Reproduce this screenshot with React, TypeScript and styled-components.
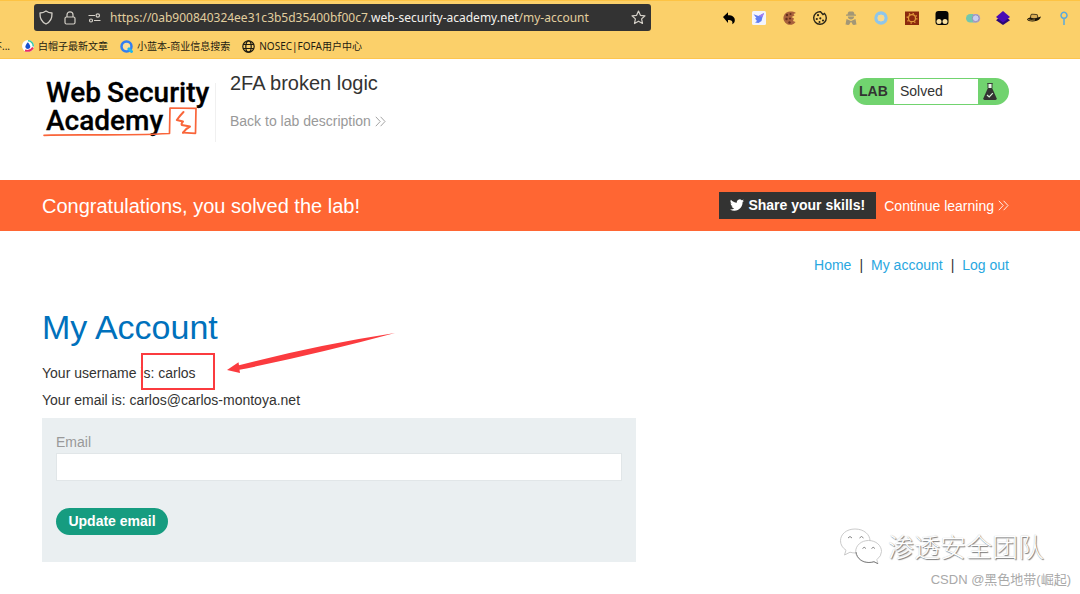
import React from 'react';
import styled, { createGlobalStyle } from 'styled-components';

const GlobalStyle = createGlobalStyle`
  *, *::before, *::after { box-sizing: border-box; }
  html, body { margin: 0; padding: 0; background: #fff; }
  body {
    font-family: "Liberation Sans", "Noto Sans CJK SC", sans-serif;
    font-size: 14px;
    line-height: 20px;
    color: #333332;
    overflow-x: hidden;
  }
  a { text-decoration: none; color: inherit; }
  svg { display: block; flex: none; }
`;

const Page = styled.div`
  position: relative;
  min-height: 100vh;
  overflow: hidden;
`;

/* ---------- browser chrome ---------- */

const Chrome = styled.div`
  background: #fbd06a;
  border-top: 1px solid #fdc344;
  border-bottom: 1px solid #fdc54e;
  font-family: "Noto Sans", "Noto Sans CJK SC", sans-serif;
`;

const Toolbar = styled.div`
  display: flex;
  align-items: center;
  gap: 70px;
  padding: 3px 8px 0 34px;
`;

const AddressBar = styled.div`
  flex: 1;
  min-width: 0;
  height: 27px;
  display: flex;
  align-items: center;
  gap: 8px;
  padding: 0 5px 0 4px;
  border-radius: 3px;
  background: #333333;
  color: #d4d0c8;
`;

const AddressInput = styled.div`
  flex: 1;
  min-width: 0;
  overflow: hidden;
  white-space: nowrap;
  font-size: 12px;
  line-height: 20px;
  color: #e2cf9f;
`;

const Domain = styled.span`
  color: #f4f2ee;
`;

const IconButton = styled.button`
  display: flex;
  align-items: center;
  justify-content: center;
  width: 16px;
  height: 16px;
  padding: 0;
  border: 0;
  background: none;
  color: inherit;
`;

const Extensions = styled.div`
  flex: none;
  width: 351px;
  display: flex;
  justify-content: space-between;
`;

const Bookmarks = styled.nav`
  height: 27px;
  display: flex;
  align-items: center;
  gap: 12px;
  padding-top: 3px;
  overflow: hidden;
  font-size: 10px;
  line-height: 16px;
  color: #1d1a10;
  white-space: nowrap;
`;

const Bookmark = styled.a`
  display: flex;
  align-items: center;
  gap: 4px;
`;

const ClippedBookmark = styled(Bookmark)`
  width: 10px;
  justify-content: flex-end;
  overflow: hidden;
`;

/* ---------- lab header ---------- */

const Gutter = styled.div`
  padding: 0 71px 0 42px;
`;

const LabHeader = styled(Gutter)`
  display: flex;
  align-items: flex-start;
  padding-top: 12px;
  height: 121px;
`;

const LogoLink = styled.a`
  display: block;
  padding-right: 2px;
  margin: 0 12px 0 0;
`;

const TitleBlock = styled.div`
  flex: 1;
`;

const LabTitle = styled.h2`
  margin: 0 0 16px;
  font-size: 20px;
  line-height: 24px;
  font-weight: 400;
`;

const ArrowLink = styled.a<{ $color: string }>`
  display: inline-flex;
  align-items: center;
  gap: 4px;
  color: ${(p) => p.$color};
  white-space: nowrap;
`;

const LabStatus = styled.div`
  display: flex;
  height: 27px;
  margin-top: 7px;
  border-radius: 14px;
  overflow: hidden;
  background: #71d36f;
  line-height: 27px;
`;

const LabTag = styled.strong`
  width: 41px;
  padding-left: 6px;
`;

const LabState = styled.span`
  width: 84px;
  padding-left: 6px;
  margin: 1px 0;
  line-height: 25px;
  background: #fff;
`;

const LabFlask = styled.span`
  width: 31px;
  padding: 4px 0 0 4px;
`;

/* ---------- banner ---------- */

const Banner = styled(Gutter)`
  display: flex;
  align-items: center;
  gap: 8px;
  height: 51px;
  background: #ff6633;
  color: #fff;
`;

const BannerText = styled.p`
  flex: 1;
  margin: 0;
  font-size: 20px;
  line-height: 24px;
`;

const ShareButton = styled.button`
  display: flex;
  align-items: center;
  justify-content: center;
  gap: 4px;
  width: 157px;
  height: 27px;
  padding: 0 0 1px;
  border: 0;
  background: #333332;
  color: #fff;
  font: bold 14px/20px "Liberation Sans", sans-serif;
`;

/* ---------- account ---------- */

const AccountNav = styled.nav`
  display: flex;
  justify-content: flex-end;
  gap: 8px;
  padding-top: 24px;
`;

const NavLink = styled.a`
  color: #29a7df;
`;

const AccountTitle = styled.h1`
  margin: 32px 0 16px;
  font-size: 34px;
  line-height: 40px;
  font-weight: 400;
  color: #0071bc;
`;

const Fact = styled.p`
  position: relative;
  margin: 0 0 7px;
`;

const Highlight = styled.span`
  position: absolute;
  left: 99px;
  top: -10px;
  width: 74px;
  height: 37px;
  border: 2px solid #fb3b3f;
`;

const Arrow = styled.svg`
  position: absolute;
  left: 185px;
  top: -32px;
`;

const EmailForm = styled.form`
  display: flex;
  flex-direction: column;
  align-items: flex-start;
  max-width: 594px;
  height: 144px;
  margin-top: 8px;
  padding: 14px;
  background: #eaeff1;
`;

const Label = styled.label`
  color: #999;
`;

const EmailInput = styled.input`
  width: 100%;
  height: 28px;
  margin: 1px 0 27px;
  padding: 0 8px;
  border: 1px solid #e1e6e8;
  background: #fff;
  font: inherit;
`;

const SubmitButton = styled.button`
  width: 112px;
  height: 27px;
  padding: 0 0 1px;
  border: 0;
  border-radius: 14px;
  background: #169c80;
  color: #fff;
  font: bold 14px/20px "Liberation Sans", sans-serif;
  white-space: nowrap;
`;

/* ---------- watermark ---------- */

const Watermark = styled.div`
  position: absolute;
  right: 9px;
  top: 526px;
  display: flex;
  flex-direction: column;
  align-items: flex-end;
  font-family: "Liberation Sans", "Noto Sans CJK SC", sans-serif;
  pointer-events: none;
`;

const TeamMark = styled.div`
  display: flex;
  align-items: center;
  gap: 5px;
  margin-right: 27px;
  font-family: "Noto Sans CJK SC", sans-serif;
  font-size: 26px;
  line-height: 40px;
  font-weight: 300;
  color: #fff;
  text-shadow: 1px 1px 1px #777, 0 0 1px #bbb;
`;

const AuthorMark = styled.div`
  margin-top: 4px;
  font-size: 13px;
  line-height: 20px;
  color: #a9a9a9;
`;

/* ---------- drawings ---------- */

const Chevrons = () => (
  <svg width="11" height="11" viewBox="0 0 11 11" fill="none" stroke="currentColor" strokeWidth="0.9">
    <path d="M0.8 0.8 5.2 5.5 0.8 10.2M5.6 0.8 10 5.5 5.6 10.2" />
  </svg>
);

const Logo = () => (
  <svg width="174" height="72" viewBox="0 -6 174 72" role="img" aria-label="Web Security Academy">
    <g fontFamily="Roboto, sans-serif" fontWeight="500" fontSize="28" fill="#000" stroke="#000" strokeWidth="0.300">
      <text x="4" y="25">Web</text>
      <text x="65" y="25">Security</text>
      <text x="4" y="53">Academy</text>
    </g>
    <g fill="none" stroke="#f9653a" strokeLinejoin="round" strokeLinecap="round">
      <path d="M2 58.300 C35 57.300 80 59 127.500 56.500 L128 31 L154 31.300 L153.500 56.300 L141 55.700" strokeWidth="1.700" />
      <path d="M141.500 35 Q138 38.500 134.800 43 L141 44.500 Q139 46.500 139.800 48 L148 49.500 Q144 51.500 141 55.700" strokeWidth="2" />
    </g>
    <path d="M173.500 6V65" stroke="#f0f0f0" />
  </svg>
);

const Flask = () => (
  <svg width="16" height="19" viewBox="0 0 16 19">
    <rect x="6" y="2" width="4" height="5" fill="#e6f7e6" />
    <path d="M5.200 1.500H10.800M6 2V6M10 2V6" stroke="#333" strokeWidth="0.900" />
    <path d="M5.900 6H10.100L14.600 16.200Q15 18 13.400 18H2.600Q1 18 1.400 16.200Z" fill="#333332" />
    <path d="m5 13 2.200 2 3.600-3.800" fill="none" stroke="#d9f3d8" strokeWidth="1.200" />
  </svg>
);

const Twitter = () => (
  <svg width="14" height="14" viewBox="0 0 24 24" fill="#fff">
    <path d="M23.950 4.600a10 10 0 0 1-2.820.770 4.960 4.960 0 0 0 2.160-2.720 9.900 9.900 0 0 1-3.120 1.180 4.920 4.920 0 0 0-8.390 4.480C7.690 8.100 4.070 6.130 1.640 3.160a4.920 4.920 0 0 0 1.520 6.570 4.900 4.900 0 0 1-2.230-.610v.060a4.920 4.920 0 0 0 3.950 4.830 5 5 0 0 1-2.210.080 4.940 4.940 0 0 0 4.600 3.420A9.870 9.870 0 0 1 0 19.540a14 14 0 0 0 7.550 2.210c9.050 0 14-7.500 14-13.980 0-.210 0-.420-.020-.630a9.900 9.900 0 0 0 2.420-2.540z" />
  </svg>
);

const Shield = () => (
  <svg width="14" height="15" viewBox="0 0 14 15" fill="none" stroke="currentColor" strokeWidth="1.300" strokeLinejoin="round">
    <path d="M7 1 C9 2.500 11 3 13 3 C13.200 8 11.500 12 7 14 C2.500 12 .8 8 1 3 C3 3 5 2.500 7 1Z" />
  </svg>
);

const Lock = () => (
  <svg width="12" height="14" viewBox="0 0 12 14" fill="none" stroke="currentColor" strokeWidth="1.200">
    <rect x="1" y="6" width="10" height="7" rx="1.500" />
    <path d="M3 6V3.800a3 3 0 0 1 6 0V6" />
  </svg>
);

const Permissions = () => (
  <svg width="13" height="10" viewBox="0 0 13 10" fill="none" stroke="currentColor" strokeWidth="1.200">
    <path d="M0.500 2.500H7M6 7.500H12.500" />
    <circle cx="9.800" cy="2.500" r="1.700" />
    <circle cx="3" cy="7.500" r="1.500" />
  </svg>
);

const Star = () => (
  <svg width="15" height="15" viewBox="0 0 15 15" fill="none" stroke="currentColor" strokeWidth="1.200" strokeLinejoin="round">
    <path d="m7.500 1 1.900 4.300 4.600.500-3.400 3.100.900 4.600-4-2.300-4 2.300.900-4.600L1 5.800l4.600-.500z" />
  </svg>
);

const extensionIcons: { name: string; art: React.ReactNode }[] = [
  {
    name: 'Undo',
    art: <path d="M2 7 7 2.300v2.900c4.700 0 7 2 6.800 5.200-.1 1.600-.9 3-2.600 3.800.8-3-.5-4.200-4.200-4.200v3z" fill="#000" />,
  },
  {
    name: 'Translate',
    art: (
      <>
        <rect x="1" y="1" width="14" height="14" rx="1.500" fill="#f4f5fc" />
        <path d="M2.500 4.200 7.500 6 13 3l-1.500 4-1 4-3 2-3.500-.5 2-1.500L4 8.500l1.500-.5z" fill="#5f7df2" />
        <path d="M7.500 6 13 3l-1.500 4z" fill="#a77cf0" />
      </>
    ),
  },
  {
    name: 'Cookie cleaner',
    art: (
      <>
        <path d="M9 1.500A6.700 6.700 0 1 0 13.600 12L11 11l1-2.500L9.500 7l3-1.500-1-1.500L14 3Q12 1 9 1.500Z" fill="#a8613c" />
        <g fill="#64301f"><circle cx="5" cy="5" r="1.200" /><circle cx="8.500" cy="4" r="1" /><circle cx="4.500" cy="9" r="1.200" /><circle cx="8" cy="8.500" r="1.100" /><circle cx="7.500" cy="12.500" r="1.200" /></g>
      </>
    ),
  },
  {
    name: 'Cookie editor',
    art: (
      <>
        <path d="M8.500 1.700A6.300 6.300 0 1 0 14.300 8 6 6 0 0 0 12.500 3.500L11 4.500 8.500 1.700Z" fill="none" stroke="#2b2618" strokeWidth="1.400" />
        <g fill="#2b2618"><circle cx="6" cy="5.200" r="1.100" /><circle cx="4.800" cy="9" r="1.100" /><circle cx="8.300" cy="8.300" r="1.100" /><circle cx="7.500" cy="12" r="1" /><circle cx="11" cy="10.500" r="1.100" /></g>
      </>
    ),
  },
  {
    name: 'Agent',
    art: (
      <g fill="#a39776">
        <path d="M5 2.500 6 1.500h4l1 1 .5 2H13v1.200H3V4.500h1.500zM4.800 6.500h6.400C11 8.500 9.800 9.500 8 9.500S5 8.500 4.800 6.500ZM3.500 9 8 11l4.500-2 1 5.500h-3L8 12l-2.500 2.500h-3z" />
        <circle cx="5" cy="13" r="1.900" /><circle cx="11" cy="13" r="1.900" />
      </g>
    ),
  },
  {
    name: 'Ring',
    art: (
      <>
        <circle cx="8" cy="8" r="5" fill="#fbe5ae" stroke="#8fc6ea" strokeWidth="3.400" />
        <circle cx="8" cy="8" r="3.300" fill="#fbd98a" />
      </>
    ),
  },
  {
    name: 'Gear',
    art: (
      <>
        <rect x="1" y="1.500" width="14" height="13.500" fill="#8c2a0d" />
        <circle cx="8" cy="8.200" r="3.500" fill="none" stroke="#e29a3a" strokeWidth="1.200" />
        <circle cx="8" cy="8.200" r="4.800" fill="none" stroke="#e29a3a" strokeWidth="1.400" strokeDasharray="1.300 2.470" />
      </>
    ),
  },
  {
    name: 'Script runner',
    art: (
      <>
        <rect x="1.500" y="1" width="13" height="14" rx="3" fill="#050505" />
        <circle cx="5" cy="11.500" r="2.500" fill="#fbe2a0" /><circle cx="11" cy="11.500" r="2.500" fill="#fbe2a0" />
      </>
    ),
  },
  {
    name: 'Toggle',
    art: (
      <>
        <rect x="1" y="4" width="14" height="8.500" rx="4.250" fill="#72c7ad" />
        <path d="M8 4h3a4.250 4.250 0 0 1 0 8.500H8z" fill="#b6a0cc" />
        <circle cx="10.700" cy="8.250" r="3.400" fill="#c9cdf0" stroke="#9689ad" strokeWidth="0.900" />
      </>
    ),
  },
  {
    name: 'Layers',
    art: (
      <>
        <path d="M8 4.500 15 10.200 8 15 1 10.200z" fill="#2c0875" />
        <path d="M8 1 15 7 8 12.500 1 7z" fill="#4a0bb5" />
      </>
    ),
  },
  {
    name: 'Hat',
    art: (
      <>
        <path d="M4.300 8 5 4.600Q5.300 4 8 4.300T11.200 4.600L12 8Q8 10 4.300 8Z" fill="#d9ad55" stroke="#2a2110" strokeWidth="0.800" />
        <path d="M4.100 7.500Q8 9.500 12 7.500L15 6.500Q14 10.500 8.500 11.300 2 11.800 1 9.500 1.500 8 4.100 7.500Z" fill="#1b1408" />
        <path d="M2 9.500Q5 11 9 9.900" fill="none" stroke="#caa452" strokeWidth="0.800" />
      </>
    ),
  },
  {
    name: 'Pin',
    art: <path d="M8 8.500V15M8 2.300a3 3 0 1 0 .01 0Z" fill="none" stroke="#5aa9dc" strokeWidth="1.500" />,
  },
];

const DropIcon = () => (
  <svg width="12" height="12" viewBox="0 0 12 12">
    <circle cx="6" cy="6" r="6" fill="#fff" />
    <path d="M6 .8A5.200 5.200 0 0 1 11.200 6.500" fill="none" stroke="#36c8a5" strokeWidth="1.500" />
    <path d="M11 7.500Q8.500 12 3 10.500" fill="none" stroke="#e72f66" strokeWidth="1.900" />
    <path d="M5.800 2.200Q8.800 5.500 8.200 7.300A2.500 2.500 0 0 1 3.400 7.300Q3 5.500 5.800 2.200Z" fill="#1751cf" />
  </svg>
);

const RingIcon = () => (
  <svg width="13" height="13" viewBox="0 0 13 13">
    <circle cx="6.500" cy="6.500" r="5" fill="#fbdf9a" stroke="#317ef2" strokeWidth="2.500" />
    <path d="m8 8 4.500 4.500" stroke="#20b5ea" strokeWidth="2.800" />
  </svg>
);

const GlobeIcon = () => (
  <svg width="13" height="13" viewBox="0 0 13 13" fill="none" stroke="#1d1a10" strokeWidth="1.200">
    <circle cx="6.500" cy="6.500" r="5.700" />
    <ellipse cx="6.500" cy="6.500" rx="2.700" ry="5.700" />
    <path d="M1.200 4.500H11.800M1.200 8.500H11.800" />
  </svg>
);

const WeChat = () => (
  <svg width="44" height="38" viewBox="0 0 44 38" fill="#fff" stroke="#c4c4c4" strokeWidth="0.900" strokeLinejoin="round">
    <path d="M16 2C7.500 2 1.500 7.200 1.500 13.700c0 4 2 7.200 5.500 9.500L5.500 28l5.500-2.800q2.500.8 6 .8C25 26 31 20.500 31 14S25 2 16 2Z" />
    <path d="M29.500 13.500C22.200 13.500 16.700 18.500 16.700 24.500S22.200 35.500 29.500 35.500q3 0 5-.8l4.500 2-1.200-4Q42.500 29 42.500 24.500C42.500 18.500 37 13.500 29.500 13.500Z" />
    <path d="M17 25C18 32 24 35.500 30 35.500q3 0 5-.8l4 2" fill="none" stroke="#777" />
    <g fill="none" stroke="#777"><path d="M9 11q2-3 4 0M20.500 11q2-3 4 0M23.500 21.500q1.700-2.500 3.400 0M32.500 21.500q1.700-2.500 3.400 0" /></g>
  </svg>
);

export default function App() {
  return (
    <Page>
      <GlobalStyle />
      <Chrome>
        <Toolbar>
          <AddressBar>
            <IconButton aria-label="Tracking protection"><Shield /></IconButton>
            <IconButton aria-label="Connection security"><Lock /></IconButton>
            <IconButton aria-label="Permissions"><Permissions /></IconButton>
            <AddressInput>
              https://0ab900840324ee31c3b5d35400bf00c7.<Domain>web-security-academy.net</Domain>/my-account
            </AddressInput>
            <IconButton aria-label="Bookmark this page"><Star /></IconButton>
          </AddressBar>
          <Extensions>
            {extensionIcons.map((icon) => (
              <IconButton key={icon.name} aria-label={icon.name}>
                <svg width="16" height="16" viewBox="0 0 16 16">{icon.art}</svg>
              </IconButton>
            ))}
          </Extensions>
        </Toolbar>
        <Bookmarks>
          <ClippedBookmark href="#">不...</ClippedBookmark>
          <Bookmark href="#"><DropIcon />白帽子最新文章</Bookmark>
          <Bookmark href="#"><RingIcon />小蓝本-商业信息搜索</Bookmark>
          <Bookmark href="#"><GlobeIcon />NOSEC|FOFA用户中心</Bookmark>
        </Bookmarks>
      </Chrome>

      <LabHeader as="header">
        <LogoLink href="#"><Logo /></LogoLink>
        <TitleBlock>
          <LabTitle>2FA broken logic</LabTitle>
          <ArrowLink href="#" $color="#999999">Back to lab description<Chevrons /></ArrowLink>
        </TitleBlock>
        <LabStatus>
          <LabTag>LAB</LabTag>
          <LabState>Solved</LabState>
          <LabFlask><Flask /></LabFlask>
        </LabStatus>
      </LabHeader>

      <Banner as="section">
        <BannerText>Congratulations, you solved the lab!</BannerText>
        <ShareButton type="button"><Twitter />Share your skills!</ShareButton>
        <ArrowLink href="#" $color="#ffffff">Continue learning<Chevrons /></ArrowLink>
      </Banner>

      <Gutter as="main">
        <AccountNav>
          <NavLink href="#">Home</NavLink>
          <span>|</span>
          <NavLink href="#">My account</NavLink>
          <span>|</span>
          <NavLink href="#">Log out</NavLink>
        </AccountNav>
        <AccountTitle>My Account</AccountTitle>
        <Fact>
          Your username is: carlos
          <Highlight />
          <Arrow width="170" height="44" viewBox="0 0 170 44">
            <path d="M0 39 11.500 31.200 12 34.200 Q90 14 168 2 Q90 23 12.500 38.800 L13 42Z" fill="#fb3b3f" />
          </Arrow>
        </Fact>
        <Fact>Your email is: carlos@carlos-montoya.net</Fact>
        <EmailForm onSubmit={(e) => e.preventDefault()}>
          <Label htmlFor="email">Email</Label>
          <EmailInput id="email" type="email" />
          <SubmitButton type="submit">Update email</SubmitButton>
        </EmailForm>
      </Gutter>

      <Watermark>
        <TeamMark><WeChat />渗透安全团队</TeamMark>
        <AuthorMark>CSDN @黑色地带(崛起)</AuthorMark>
      </Watermark>
    </Page>
  );
}
